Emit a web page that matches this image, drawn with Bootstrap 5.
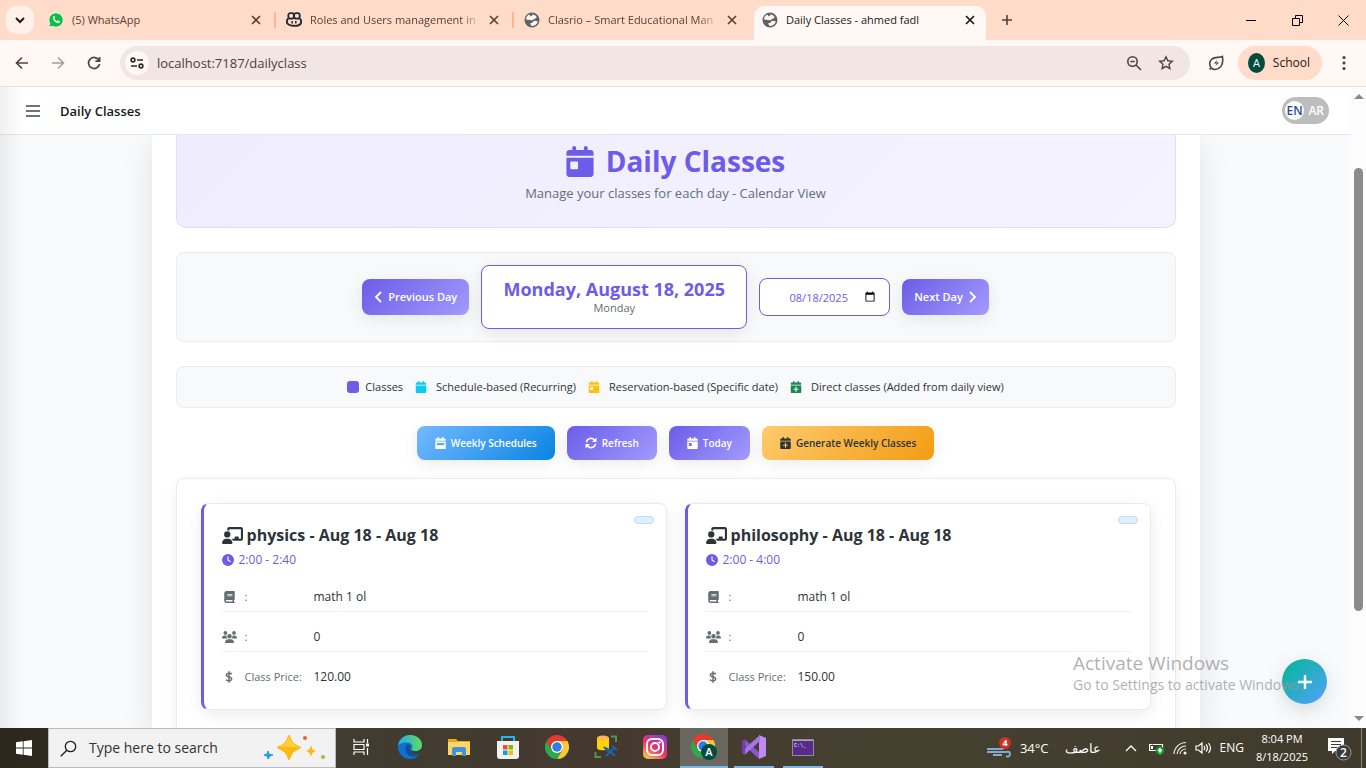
<!DOCTYPE html>
<html lang="en">
<head>
<meta charset="utf-8">
<meta name="viewport" content="width=device-width, initial-scale=1">
<title>Daily Classes - ahmed fadl</title>
<link href="https://cdn.jsdelivr.net/npm/bootstrap@5.3.0/dist/css/bootstrap.min.css" rel="stylesheet">
<style>
:root { --violet: #6c5ce7; --violet-soft: #a29bfe; --ink: #2d3436; --muted: #636e72; --line: #e9ecef; }
body { font-family: "Open Sans", "Noto Sans", sans-serif; font-size: 12px; line-height: 20px; color: var(--ink); height: 100vh; overflow: hidden; }
svg { display: block; flex: none; }
button { font-family: inherit; }
.bare { border: 0; background: none; padding: 0; color: inherit; }

/* browser tabs */
.tabstrip { background: #ffdbc9; height: 40px; color: #5a4038; }
.tab-search { width: 28px; height: 28px; border-radius: 10px; background: #fff0ea; margin: 6px 4px 0 6px; color: #231917; }
.tab-slot { flex: 0 1 238px; min-width: 0; height: 40px; padding: 0 15px 0 10px; position: relative; }
.tab-slot.parted::after { content: ""; position: absolute; right: 0; top: 12px; width: 2px; height: 16px; background: #ffb68f; }
.tab-name { overflow: hidden; white-space: nowrap; flex: 1; font-size: 11px; }
.tab-fade { -webkit-mask-image: linear-gradient(90deg, #000 88%, transparent); mask-image: linear-gradient(90deg, #000 88%, transparent); }
.tab-live { color: #231917; }
.tab-live::before { content: ""; position: absolute; inset: 6px 4px 0 2px; background: #fff8f5; border-radius: 10px 10px 0 0; }
.tab-live > * { position: relative; }
.win-btn { width: 46px; height: 40px; color: #000; }

/* browser toolbar */
.toolbar { background: #fff8f5; height: 47px; border-bottom: 1px solid #f3dcd3; color: #53433e; }
.tool-btn { width: 36px; height: 36px; }
.omnibox { background: #f1e6e3; height: 34px; border-radius: 17px; padding: 0 12px 0 5px; }
.site-info { width: 24px; height: 24px; border-radius: 50%; background: #fff8f5; }
.url-field { border: 0; background: none; outline: 0; flex: 1; min-width: 0; font-size: 13px; color: #4b3e3a; padding: 0; }
.leaf-btn { margin: 0 14px 0 18px; }
.profile { background: #ffdbc9; height: 34px; border-radius: 17px; padding: 0 12px 0 10px; color: #2b1510; width: 84px; }
.initial { width: 20px; height: 20px; border-radius: 50%; background: #004d40; color: #fff; font-size: 11px; }

/* page */
.viewport-area { background: #f8fafc; min-height: 0; }
.page-bar { background: #fff; height: 48px; border-bottom: 1px solid #e5e7eb; padding: 0 22px 0 26px; position: relative; z-index: 2; }
.page-name { font-size: 13px; font-weight: 600; color: #16181d; }
.lang { background: #bdbdbd; width: 47px; height: 27px; border-radius: 14px; color: #fff; font-weight: 600; padding: 0 5px 0 3px; }
.lang-on { width: 19px; height: 19px; border-radius: 50%; background: #fff; color: #1f4e9e; }
.edge-shade { position: absolute; inset: 0 auto 0 0; width: 24px; background: linear-gradient(90deg, rgba(0,0,0,.06), transparent); z-index: 3; pointer-events: none; }
.sheet { background: #fff; width: 100%; max-width: 1048px; padding: 0 24px; box-shadow: 0 10px 30px rgba(0,0,0,.1); height: 100%; }
.hero { background: linear-gradient(135deg, #efecfe, #f5f3ff); border: 1px solid #e1ddf8; border-top: 0; border-radius: 0 0 10px 10px; padding: 6px 24px 24px; margin-bottom: 24px; }
.hero h1 { font-size: 28px; line-height: 40px; font-weight: 700; color: var(--violet); margin: 0 0 2px; }
.hero p { font-size: 13px; margin: 0; color: var(--muted); }
.strip { background: #f8f9fa; border: 1px solid var(--line); border-radius: 8px; }
.soft { box-shadow: 0 4px 16px rgba(0,0,0,.08); }
.day-nav { min-height: 90px; }
.pill-btn { border: 0; border-radius: 8px; font-size: 10px; font-weight: 600; color: #fff; display: flex; align-items: center; justify-content: center; gap: 5px; height: 34px; padding: 0 18px; white-space: nowrap; box-shadow: 0 4px 16px rgba(0,0,0,.08); }
.pill-violet { background: linear-gradient(135deg, var(--violet), var(--violet-soft)); }
.pill-blue { background: linear-gradient(135deg, #74b9ff, #0984e3); }
.pill-amber { background: linear-gradient(135deg, #fdcb6e, #f39c12); color: var(--ink); }
.pill-nav { height: 36px; padding: 0 12px; font-size: 11px; }
.day-box { background: #fff; border: 1px solid var(--violet); border-radius: 8px; padding: 12px 20px; min-width: 266px; }
.day-long { font-size: 18px; line-height: 22px; font-weight: 700; color: var(--violet); }
.day-short { font-size: 11px; line-height: 16px; color: var(--muted); }
.day-input { width: 131px; height: 38px; border: 1px solid var(--violet); border-radius: 8px; background: #fff; color: var(--violet); font: 11px "Open Sans", sans-serif; padding: 0 13px; text-align: center; }
.day-input::-webkit-calendar-picker-indicator { width: 12px; height: 12px; padding: 0; }
.legend-row { padding: 10px; font-size: 11px; gap: 11px; }
.swatch { width: 12px; height: 12px; border-radius: 3px; background: var(--violet); margin-right: 6px; }
.actions { gap: 12px; margin: 18px 0; }
.board { border: 1px solid var(--line); border-radius: 8px; padding: 24px; background: #fff; height: 400px; box-shadow: 0 4px 16px rgba(0,0,0,.05); }
.class-grid { display: grid; grid-template-columns: 1fr 1fr; gap: 18px; }
.lesson { position: relative; border: 1px solid var(--line); border-left: 3px solid var(--violet); border-radius: 8px; padding: 18px; background: #fff; }
.lesson h2 { font-size: 16px; line-height: 26px; font-weight: 700; margin: 0 0 2px; }
.lesson-time { color: var(--violet); margin-bottom: 2px; gap: 5px; }
.status-chip { position: absolute; top: 12px; right: 12px; width: 20px; height: 8px; border-radius: 4px; background: #dfeffe; border: 1px solid #bcdcfb; }
.fact { padding: 15px 0 4px; border-bottom: 1px solid #f1f3f4; gap: 8px; color: var(--muted); }
.fact:last-child { border-bottom: 0; padding-bottom: 0; margin-bottom: 4px; }
.fact-icon { width: 15px; display: flex; justify-content: center; }
.fact dt { width: 61px; font-size: 11px; font-weight: 400; white-space: nowrap; }
.fact dd { margin: 0; font-weight: 500; color: var(--ink); }
.add-fab { position: absolute; right: 24px; bottom: 24px; width: 45px; height: 45px; border-radius: 50%; border: 0; background: linear-gradient(135deg, #00b894, #54a0ff); color: #fff; box-shadow: 0 6px 20px rgba(0,0,0,.13); z-index: 4; }
.activation { position: absolute; right: 18px; bottom: 33px; width: 260px; color: rgba(150,150,150,.75); z-index: 5; pointer-events: none; white-space: nowrap; }
.activation-head { font-size: 19px; line-height: 24px; }
.activation-note { font-size: 14px; line-height: 20px; }
.scroller { width: 15px; background: #fcfcfc; padding: 7px 0; color: #8b8b8b; }
.scroll-gap { flex: 69; }
.scroll-thumb { width: 9px; border-radius: 5px; background: #8b8b8b; flex: 443; }
.scroll-rest { flex: 105; }

/* taskbar */
.taskbar { height: 40px; background: linear-gradient(90deg, #2c261c, #403c2f 25%, #45392f 45%, #45412f 65%, #403a2c); color: #fff; }
.start { width: 48px; }
.search-wrap { width: 288px; background: #f2f2f2; border: 1px solid #bbb; color: #1c1c1c; padding: 0 8px 0 11px; }
.search-wrap input { border: 0; background: none; outline: 0; flex: 1; min-width: 0; padding: 0; font-size: 14px; color: #333; }
.search-wrap input::placeholder { color: #333; opacity: 1; }
.task { width: 48px; margin-right: 1px; border-bottom: 2px solid transparent; }
.task-view { width: 50px; margin: 0; }
.task.running { width: 40px; margin: 0 4px 0 5px; border-color: #76b9ed; }
.task.current { background: #6a675e; border-color: #76b9ed; }
.clock { width: 60px; font-size: 11px; line-height: 18px; }
.temp { font-size: 13px; }
.show-desktop { width: 5px; border-left: 1px solid #8a867b; }
</style>
</head>
<body class="d-flex flex-column">

<svg width="0" height="0" class="position-absolute" aria-hidden="true">
  <defs>
    <symbol id="x" viewBox="0 0 10 10"><path d="M1 1l8 8M9 1L1 9" stroke="currentColor" stroke-width="1.7" fill="none"/></symbol>
    <symbol id="globe" viewBox="0 0 16 16"><circle cx="8" cy="8" r="7.5" fill="#5f6368"/><path d="M8.5 2.2c1.8.3 3.6 1.500 4.300 3.200-1 .2-1.300 1.400-2.500 1.500-1.300.1-1.200 1.200-2.300 1.400-1.400.1-2.900-.6-4.200-.5-.6.100-1.500-.3-1.800-.8.300-2 1.500-3.700 3.200-4.500.3.700 1.300 1 1.200 1.800 1 0 1.800-.4 2.100-2.100zM13.800 9c-.2 2-1.500 3.900-3.500 4.600-.9.3-2 .4-3.100.2 0-.9-.9-1.200-.9-2.100.1-.8 1.500-.8 2.300-1.300.9-.6.800-1.500 1.900-1.600 1.100-.1 2.200.700 3.300.2z" fill="#fff5ef"/></symbol>
    <symbol id="cal" viewBox="0 0 448 512"><path fill="currentColor" d="M96 32V64H48C21.500 64 0 85.500 0 112v48H448V112c0-26.500-21.500-48-48-48H352V32c0-17.700-14.300-32-32-32s-32 14.300-32 32V64H160V32c0-17.700-14.300-32-32-32S96 14.300 96 32zM448 192H0V464c0 26.500 21.500 48 48 48H400c26.500 0 48-21.500 48-48V192z"/></symbol>
    <symbol id="cal-day" viewBox="0 0 448 512"><path fill="currentColor" fill-rule="evenodd" d="M128 0c17.700 0 32 14.300 32 32V64H288V32c0-17.700 14.300-32 32-32s32 14.300 32 32V64h48c26.500 0 48 21.500 48 48v48H0V112C0 85.500 21.500 64 48 64H96V32c0-17.700 14.300-32 32-32zM0 192H448V464c0 26.500-21.500 48-48 48H48c-26.500 0-48-21.500-48-48V192zm80 64c-8.800 0-16 7.200-16 16v96c0 8.800 7.200 16 16 16h96c8.800 0 16-7.200 16-16V272c0-8.800-7.200-16-16-16H80z"/></symbol>
    <symbol id="cal-week" viewBox="0 0 448 512"><path fill="currentColor" fill-rule="evenodd" d="M128 0c17.700 0 32 14.300 32 32V64H288V32c0-17.700 14.300-32 32-32s32 14.300 32 32V64h48c26.500 0 48 21.500 48 48v48H0V112C0 85.500 21.500 64 48 64H96V32c0-17.700 14.300-32 32-32zM0 192H448V464c0 26.500-21.500 48-48 48H48c-26.500 0-48-21.500-48-48V192zm80 64c-8.800 0-16 7.200-16 16v64c0 8.800 7.200 16 16 16H368c8.800 0 16-7.200 16-16V272c0-8.800-7.200-16-16-16H80z"/></symbol>
    <symbol id="cal-plus" viewBox="0 0 448 512"><path fill="currentColor" fill-rule="evenodd" d="M128 0c17.700 0 32 14.300 32 32V64H288V32c0-17.700 14.300-32 32-32s32 14.300 32 32V64h48c26.500 0 48 21.500 48 48v48H0V112C0 85.500 21.500 64 48 64H96V32c0-17.700 14.300-32 32-32zM0 192H448V464c0 26.500-21.500 48-48 48H48c-26.500 0-48-21.500-48-48V192zM200 248v80h-80v48h80v80h48v-80h80v-48h-80v-80z"/></symbol>
    <symbol id="sync" viewBox="0 0 16 16"><path d="M2 7a6 6 0 0 1 10.600-3M14 9a6 6 0 0 1-10.600 3" fill="none" stroke="currentColor" stroke-width="2.200"/><path d="M15.300.8v6H9.300zM.7 15.200v-6h6z" fill="currentColor"/></symbol>
    <symbol id="clock" viewBox="0 0 512 512"><path fill="currentColor" fill-rule="evenodd" d="M256 0a256 256 0 1 1 0 512A256 256 0 1 1 256 0zM232 120V256c0 8 4 15.500 10.700 20l96 64c11 7.400 25.900 4.400 33.300-6.700s4.400-25.900-6.700-33.300L280 243.200V120c0-13.300-10.700-24-24-24s-24 10.700-24 24z"/></symbol>
    <symbol id="book" viewBox="0 0 448 512"><path fill="currentColor" fill-rule="evenodd" d="M96 0C43 0 0 43 0 96V416c0 53 43 96 96 96H416c17.700 0 32-14.300 32-32s-14.300-32-32-32V384c17.700 0 32-14.300 32-32V32c0-17.700-14.300-32-32-32H96zm0 384H352v64H96c-17.700 0-32-14.300-32-32s14.300-32 32-32zm32-240c0-8.800 7.200-16 16-16H336c8.800 0 16 7.200 16 16s-7.200 16-16 16H144c-8.800 0-16-7.200-16-16zm16 48H336c8.800 0 16 7.200 16 16s-7.200 16-16 16H144c-8.800 0-16-7.200-16-16s7.200-16 16-16z"/></symbol>
    <symbol id="group" viewBox="0 0 640 512"><path fill="currentColor" d="M144 0a80 80 0 1 1 0 160A80 80 0 1 1 144 0zM512 0a80 80 0 1 1 0 160A80 80 0 1 1 512 0zM0 298.700C0 239.800 47.800 192 106.700 192h42.700c15.900 0 31 3.500 44.600 9.700c-1.300 7.200-1.900 14.700-1.900 22.300c0 38.200 16.800 72.500 43.300 96H21.300C9.600 320 0 310.400 0 298.700zM405.300 320c26.600-23.500 43.300-57.800 43.300-96c0-7.600-.7-15-1.900-22.300c13.600-6.300 28.700-9.700 44.600-9.700h42.700C592.200 192 640 239.800 640 298.700c0 11.800-9.600 21.300-21.300 21.300H405.300zM224 224a96 96 0 1 1 192 0 96 96 0 1 1-192 0zM128 485.300C128 411.700 187.700 352 261.300 352H378.700C452.300 352 512 411.700 512 485.300c0 14.700-11.900 26.700-26.700 26.700H154.700c-14.700 0-26.700-11.900-26.700-26.700z"/></symbol>
    <symbol id="dollar" viewBox="0 0 320 512"><path d="M262 110c-60-14-190-36-214 52-22 112 240 68 228 178-12 100-160 78-232 46M160 32v448" fill="none" stroke="currentColor" stroke-width="62" stroke-linecap="round"/></symbol>
    <symbol id="teach" viewBox="0 0 640 512"><path fill="currentColor" d="M160 64c0-35.300 28.700-64 64-64H576c35.300 0 64 28.700 64 64V352c0 35.300-28.700 64-64 64H336.800c-11.800-25.500-29.900-47.500-52.400-64H384V320c0-17.700 14.300-32 32-32h64c17.700 0 32 14.300 32 32v32h64V64H224v49.100C205.200 102.200 183.300 96 160 96V64zm0 64a96 96 0 1 1 0 192 96 96 0 1 1 0-192zM133.300 352h53.300C260.300 352 320 411.700 320 485.300c0 14.700-11.900 26.700-26.700 26.700H26.700C11.900 512 0 500.100 0 485.300C0 411.700 59.700 352 133.300 352z"/></symbol>
    <symbol id="chrome" viewBox="0 0 24 24"><path d="M12 6h10.400A12 12 0 0 1 12 24l5.200-9z" fill="#fcc934"/><path d="M1.600 6A12 12 0 0 0 12 24l5.200-9H6.800z" fill="#2da94f"/><path d="M1.600 6A12 12 0 0 1 22.400 6H12l-5.200 9z" fill="#e33b2e"/><circle cx="12" cy="12" r="6" fill="#fff"/><circle cx="12" cy="12" r="4.700" fill="#2f7ce6"/></symbol>
  </defs>
</svg>

<header class="tabstrip d-flex flex-shrink-0">
  <button class="bare tab-search d-flex align-items-center justify-content-center" aria-label="Search tabs"><svg width="10" height="8" viewBox="0 0 10 8"><path d="M1 2l4 4 4-4" fill="none" stroke="currentColor" stroke-width="2"/></svg></button>
  <div class="tab-slot parted d-flex align-items-center">
    <svg class="me-2" width="16" height="16" viewBox="0 0 16 16"><path d="M8 .8a7.200 7.200 0 1 1-3.500 13.500L.8 15.300l1-3.700A7.200 7.200 0 0 1 8 .8z" fill="#0fbf45" stroke="#fff" stroke-width=".8"/><path d="M5.300 4.300c.6-.6 1.200-.3 1.400.3l.5 1.200c.1.500-.5.8-.7 1.200.6 1.100 1.500 1.900 2.600 2.300.4-.3.700-1.100 1.200-.9l1.400.7c.5.300.2 1.300-.3 1.700-2.500 1.600-8-3-6.100-6.500z" fill="#fff"/></svg>
    <span class="tab-name">(5) WhatsApp</span><button class="bare" aria-label="Close tab"><svg width="10" height="10"><use href="#x"/></svg></button>
  </div>
  <div class="tab-slot parted d-flex align-items-center">
    <svg class="me-2" width="16" height="16" viewBox="0 0 16 16"><rect x="2.300" y="1.200" width="5.600" height="5.400" rx="2" fill="none" stroke="#24292f" stroke-width="1.800"/><rect x="8.100" y="1.200" width="5.600" height="5.400" rx="2" fill="none" stroke="#24292f" stroke-width="1.800"/><path d="M2.200 6.500C1 7.500.7 9 1 11c2 3 12 4.500 14 0 .3-2 0-3.500-1.200-4.500" fill="none" stroke="#24292f" stroke-width="1.900"/><path d="M6.200 9v2.500M9.800 9v2.500" stroke="#24292f" stroke-width="1.500"/></svg>
    <span class="tab-name tab-fade">Roles and Users management in</span><button class="bare ms-2" aria-label="Close tab"><svg width="10" height="10"><use href="#x"/></svg></button>
  </div>
  <div class="tab-slot d-flex align-items-center">
    <svg class="me-2" width="16" height="16"><use href="#globe"/></svg>
    <span class="tab-name tab-fade">Clasrio – Smart Educational Man</span><button class="bare ms-2" aria-label="Close tab"><svg width="10" height="10"><use href="#x"/></svg></button>
  </div>
  <div class="tab-slot tab-live d-flex align-items-center">
    <svg class="me-2" width="16" height="16"><use href="#globe"/></svg>
    <span class="tab-name">Daily Classes - ahmed fadl</span><button class="bare" aria-label="Close tab"><svg width="10" height="10"><use href="#x"/></svg></button>
  </div>
  <button class="bare px-2" aria-label="New tab"><svg class="mx-1" width="10" height="10" viewBox="0 0 10 10"><path d="M5 0v10M0 5h10" stroke="currentColor" stroke-width="1.600"/></svg></button>
  <div class="d-flex ms-auto">
    <button class="bare win-btn d-flex align-items-center justify-content-center" aria-label="Minimize"><svg width="10" height="10" viewBox="0 0 10 10"><path d="M0 5.500h10" stroke="currentColor"/></svg></button>
    <button class="bare win-btn d-flex align-items-center justify-content-center" aria-label="Restore"><svg width="11" height="11" viewBox="0 0 11 11"><path d="M.5 3.500h7v7h-7zM3.500 3V.500h7v7H8" fill="none" stroke="currentColor"/></svg></button>
    <button class="bare win-btn d-flex align-items-center justify-content-center" aria-label="Close window"><svg width="11" height="11" viewBox="0 0 11 11"><path d="M.5.5l10 10M10.500.5l-10 10" fill="none" stroke="currentColor"/></svg></button>
  </div>
</header>

<nav class="toolbar d-flex flex-shrink-0 align-items-center ps-1" aria-label="Browser">
  <button class="bare tool-btn d-flex align-items-center justify-content-center" aria-label="Back"><svg width="14" height="14" viewBox="0 0 14 14"><path d="M7 1.500L1.500 7 7 12.500M1.500 7H13" fill="none" stroke="currentColor" stroke-width="1.700"/></svg></button>
  <button class="bare tool-btn d-flex align-items-center justify-content-center opacity-50" aria-label="Forward"><svg width="14" height="14" viewBox="0 0 14 14"><path d="M7 1.500L12.500 7 7 12.500M12.500 7H1" fill="none" stroke="currentColor" stroke-width="1.500"/></svg></button>
  <button class="bare tool-btn d-flex align-items-center justify-content-center" aria-label="Reload"><svg width="14" height="14" viewBox="0 0 14 14"><path d="M12 4.500A5.500 5.500 0 1 0 12.500 8M12.600 1v4.200H8.400" fill="none" stroke="currentColor" stroke-width="1.700"/></svg></button>
  <div class="omnibox d-flex align-items-center flex-grow-1 ms-2">
    <button class="bare site-info d-flex align-items-center justify-content-center me-2" aria-label="Site information"><svg width="14" height="12" viewBox="0 0 14 12"><g fill="none" stroke="#332824" stroke-width="1.600"><circle cx="3" cy="3" r="1.900"/><path d="M7 3h6M1 9h6"/><circle cx="11" cy="9" r="1.900"/></g></svg></button>
    <input class="url-field" type="text" aria-label="Address" value="localhost:7187/dailyclass">
    <button class="bare me-3" aria-label="Zoom"><svg width="16" height="16" viewBox="0 0 16 16"><g fill="none" stroke="currentColor" stroke-width="1.600"><circle cx="6.500" cy="6.500" r="4.700"/><path d="M10 10l5 5M4.300 6.500h4.400"/></g></svg></button>
    <button class="bare me-1" aria-label="Bookmark"><svg width="16" height="16" viewBox="0 0 16 16"><path d="M8 1.800l1.900 4 4.400.5-3.300 3 .9 4.300L8 11.400l-3.900 2.200.9-4.300-3.300-3 4.400-.5z" fill="none" stroke="currentColor" stroke-width="1.400"/></svg></button>
  </div>
  <button class="bare leaf-btn" aria-label="Energy saver"><svg width="16" height="16" viewBox="0 0 16 16"><path d="M1.500 14.500l1.700-1.700M3.200 12.800C.8 9.800 1.600 6 4 4c3-2.300 7-1 10.400-2.600.8 4.600-.3 9.600-3.500 11.800-2.400 1.600-5.700 1.500-7.700-.4z" fill="none" stroke="currentColor" stroke-width="1.600"/><path d="M9.600 4.500L5.800 8.600h3L7.300 11.300l3.900-3.900h-3z" fill="currentColor"/></svg></button>
  <button class="bare profile d-flex align-items-center gap-1"><span class="initial d-flex align-items-center justify-content-center me-1">A</span>School</button>
  <button class="bare mx-3 px-1" aria-label="Menu"><svg width="4" height="16" viewBox="0 0 4 16" fill="currentColor"><circle cx="2" cy="2.500" r="1.600"/><circle cx="2" cy="8" r="1.600"/><circle cx="2" cy="13.500" r="1.600"/></svg></button>
</nav>

<div class="viewport-area d-flex flex-grow-1">
  <div class="position-relative flex-grow-1 d-flex flex-column overflow-hidden">
    <div class="edge-shade"></div>
    <header class="page-bar d-flex align-items-center flex-shrink-0">
      <button class="bare me-3" aria-label="Toggle menu"><svg width="14" height="12" viewBox="0 0 14 12"><path d="M0 1h14M0 6h14M0 11h14" stroke="#6b7280" stroke-width="2"/></svg></button>
      <span class="page-name ms-1">Daily Classes</span>
      <button class="bare lang ms-auto d-flex align-items-center justify-content-between"><span class="lang-on d-flex align-items-center justify-content-center">EN</span><span>AR</span></button>
    </header>

    <main class="flex-grow-1 overflow-hidden">
      <div class="sheet mx-auto">
        <section class="hero text-center">
          <h1 class="d-flex justify-content-center align-items-center gap-2"><svg class="me-1" width="28" height="31"><use href="#cal-day"/></svg>Daily Classes</h1>
          <p>Manage your classes for each day - Calendar View</p>
        </section>

        <section class="strip day-nav d-flex justify-content-center align-items-center flex-wrap py-2 mb-4">
          <div class="d-flex align-items-center gap-2 py-1">
            <button class="pill-btn pill-violet pill-nav me-1"><svg width="9" height="12" viewBox="0 0 9 12"><path d="M7 1L2 6l5 5" fill="none" stroke="currentColor" stroke-width="1.800"/></svg>Previous Day</button>
            <div class="day-box soft text-center me-1"><div class="day-long">Monday, August 18, 2025</div><div class="day-short">Monday</div></div>
            <input class="day-input me-1" type="date" value="2025-08-18" aria-label="Pick a day">
            <button class="pill-btn pill-violet pill-nav">Next Day<svg width="9" height="12" viewBox="0 0 9 12"><path d="M2 1l5 5-5 5" fill="none" stroke="currentColor" stroke-width="1.800"/></svg></button>
          </div>
        </section>

        <section class="strip legend-row d-flex justify-content-center align-items-center flex-wrap">
          <span class="d-flex align-items-center"><i class="swatch"></i>Classes</span>
          <span class="d-flex align-items-center"><svg class="text-info me-2" width="14" height="12"><use href="#cal"/></svg>Schedule-based (Recurring)</span>
          <span class="d-flex align-items-center"><svg class="text-warning me-2" width="14" height="12"><use href="#cal-day"/></svg>Reservation-based (Specific date)</span>
          <span class="d-flex align-items-center"><svg class="text-success me-2" width="14" height="12"><use href="#cal-plus"/></svg>Direct classes (Added from daily view)</span>
        </section>

        <section class="actions d-flex justify-content-center flex-wrap">
          <button class="pill-btn pill-blue"><svg width="11" height="12"><use href="#cal-week"/></svg>Weekly Schedules</button>
          <button class="pill-btn pill-violet"><svg width="12" height="12"><use href="#sync"/></svg>Refresh</button>
          <button class="pill-btn pill-violet"><svg width="11" height="12"><use href="#cal-day"/></svg>Today</button>
          <button class="pill-btn pill-amber"><svg width="11" height="12"><use href="#cal-plus"/></svg>Generate Weekly Classes</button>
        </section>

        <section class="board">
          <div class="class-grid">
            <article class="lesson soft">
              <span class="status-chip"></span>
              <h2 class="d-flex align-items-center gap-1"><svg width="21" height="17"><use href="#teach"/></svg>physics - Aug 18 - Aug 18</h2>
              <div class="lesson-time d-flex align-items-center"><svg width="12" height="12"><use href="#clock"/></svg>2:00 - 2:40</div>
              <dl class="m-0">
                <div class="fact d-flex align-items-center"><span class="fact-icon"><svg width="11" height="12"><use href="#book"/></svg></span><dt>:</dt><dd>math 1 ol</dd></div>
                <div class="fact d-flex align-items-center"><span class="fact-icon"><svg width="15" height="12"><use href="#group"/></svg></span><dt>:</dt><dd>0</dd></div>
                <div class="fact d-flex align-items-center"><span class="fact-icon"><svg width="8" height="12"><use href="#dollar"/></svg></span><dt>Class Price:</dt><dd>120.00</dd></div>
              </dl>
            </article>
            <article class="lesson soft">
              <span class="status-chip"></span>
              <h2 class="d-flex align-items-center gap-1"><svg width="21" height="17"><use href="#teach"/></svg>philosophy - Aug 18 - Aug 18</h2>
              <div class="lesson-time d-flex align-items-center"><svg width="12" height="12"><use href="#clock"/></svg>2:00 - 4:00</div>
              <dl class="m-0">
                <div class="fact d-flex align-items-center"><span class="fact-icon"><svg width="11" height="12"><use href="#book"/></svg></span><dt>:</dt><dd>math 1 ol</dd></div>
                <div class="fact d-flex align-items-center"><span class="fact-icon"><svg width="15" height="12"><use href="#group"/></svg></span><dt>:</dt><dd>0</dd></div>
                <div class="fact d-flex align-items-center"><span class="fact-icon"><svg width="8" height="12"><use href="#dollar"/></svg></span><dt>Class Price:</dt><dd>150.00</dd></div>
              </dl>
            </article>
          </div>
        </section>
      </div>
    </main>

    <button class="add-fab d-flex align-items-center justify-content-center" aria-label="Add class"><svg width="16" height="16" viewBox="0 0 16 16"><path d="M8 1v14M1 8h14" stroke="currentColor" stroke-width="2.400"/></svg></button>
    <div class="activation"><div class="activation-head">Activate Windows</div><div class="activation-note">Go to Settings to activate Windows.</div></div>
  </div>
  <div class="scroller d-flex flex-column align-items-center" aria-hidden="true">
    <svg width="10" height="5" viewBox="0 0 10 5"><path d="M0 5l5-5 5 5z" fill="currentColor"/></svg>
    <div class="scroll-gap"></div><div class="scroll-thumb"></div><div class="scroll-rest"></div>
    <svg width="10" height="5" viewBox="0 0 10 5"><path d="M0 0l5 5 5-5z" fill="currentColor"/></svg>
  </div>
</div>

<footer class="taskbar d-flex flex-shrink-0">
  <button class="bare start d-flex align-items-center justify-content-center" aria-label="Start"><svg width="16" height="16" viewBox="0 0 16 16" fill="#fff"><path d="M0 2.200l6.800-.9v6.300H0zM7.600 1.200L16 0v7.600H7.600zM0 8.400h6.800v6.300L0 13.800zM7.600 8.400H16V16l-8.400-1.200z"/></svg></button>
  <div class="search-wrap d-flex align-items-center">
    <svg class="me-2" width="17" height="17" viewBox="0 0 17 17"><g fill="none" stroke="currentColor" stroke-width="1.300"><circle cx="10.500" cy="6.500" r="5.200"/><path d="M6.800 10.200L.8 16.200"/></g></svg>
    <input class="ms-1" type="text" placeholder="Type here to search" aria-label="Type here to search">
    <svg width="64" height="28" viewBox="0 0 64 28"><path d="M26 2c2 6 4 9 11 11.500C30 16 28 19 26 25c-2-6-4-9-11-11.500C22 11 24 8 26 2z" fill="#fdb913" stroke="#fdb913" stroke-width="2" stroke-linejoin="round"/><path d="M26 2c2 6 4 9 11 11.500-6 0-16-2-22 0C22 11 24 8 26 2z" fill="#ffcf38"/><path d="M48 11c1 4 2 5 5 6-3 1-4 2-5 6-1-4-2-5-5-6 3-1 4-2 5-6z" fill="#fdb913"/><path d="M5 17l1 3 4 1-3 1-2 3-1-3-3-1 3-1z" fill="#1f9ee8" stroke="#1f9ee8"/><circle cx="42" cy="4" r="2" fill="#f0622d"/><circle cx="60" cy="23" r="2" fill="#8cc63f"/></svg>
  </div>
  <button class="bare task task-view d-flex align-items-center justify-content-center" aria-label="Task view"><svg width="17" height="16" viewBox="0 0 17 16"><path d="M1 0v3h10V0M1 16v-3h10v3M1 5.500h10v5H1zM14.500 0v4M14.500 9v7" fill="none" stroke="#fff" stroke-width="1.200"/><path d="M13 4.500h3v3h-3z" fill="#fff"/></svg></button>
  <button class="bare task d-flex align-items-center justify-content-center" aria-label="Edge"><svg width="24" height="24" viewBox="0 0 24 24"><defs><linearGradient id="eg" x1="0" x2="1"><stop offset="0" stop-color="#28a8ea"/><stop offset="1" stop-color="#5fdc5a"/></linearGradient></defs><circle cx="12" cy="12" r="12" fill="#0c71cf"/><path d="M0 11C.5 4.500 6 0 12 0c7 0 12 4.500 12 10 0 4-3 6.200-6.500 6.200-3 0-4.500-1.200-4-2.200 2.500-3.500-.5-6.500-4.500-6.500C4.500 7.500 1 9 0 11z" fill="url(#eg)"/><path d="M9 9.500c-3 4-1.500 11 4.500 12 4 .5 7-1 9.500-4-5 2-10.500 1-11-3.500 0-1 .5-2 .5-3 0-.8-1.500-2-3.500-1.500z" fill="#174f93"/><path d="M24 17c-2 2-5 2.500-8 1.800-3-.8-3-3-2.500-4.800 0 1.500 1.500 2.200 4 2.200 3 0 5-1.200 6.500-3.700z" fill="#403c2f"/></svg></button>
  <button class="bare task d-flex align-items-center justify-content-center" aria-label="File Explorer"><svg width="22" height="20" viewBox="0 0 22 20"><path d="M0 2h8l2 2h12v14H0z" fill="#e8a820"/><path d="M0 5h22v13H0z" fill="#ffd666"/><path d="M4 19v-7q0-2 2-2h10q2 0 2 2v7h-4v-4H8v4z" fill="#3f93dc"/></svg></button>
  <button class="bare task d-flex align-items-center justify-content-center" aria-label="Store"><svg width="24" height="24" viewBox="0 0 24 24"><path d="M6 6V2h12v4" fill="none" stroke="#28b5ea" stroke-width="2"/><path d="M1 6h22v15q0 3-3 3H4q-3 0-3-3z" fill="#f1f1f1"/><path d="M7 10h4.500v4.500H7z" fill="#f25022"/><path d="M12.500 10H17v4.500h-4.500z" fill="#7fba00"/><path d="M7 15.500h4.500V20H7z" fill="#00a4ef"/><path d="M12.500 15.500H17V20h-4.500z" fill="#ffb900"/></svg></button>
  <button class="bare task d-flex align-items-center justify-content-center" aria-label="Chrome"><svg width="24" height="24"><use href="#chrome"/></svg></button>
  <button class="bare task d-flex align-items-center justify-content-center" aria-label="Management Studio"><svg width="24" height="24" viewBox="0 0 24 24"><path d="M3 3v10c0 3 12 3 12 0V3z" fill="#ffd400"/><ellipse cx="9" cy="3" rx="6" ry="2.500" fill="#ffb74d"/><path d="M17 1.500h5V7M1.500 17v5H7" fill="none" stroke="#4d9a45" stroke-width="2"/><path d="M12 13l9 8M21 12l-9 9" stroke="#1565b0" stroke-width="2.200"/><path d="M18 11l5 4M10 12l4 4" stroke="#1565b0" stroke-width="2"/></svg></button>
  <button class="bare task d-flex align-items-center justify-content-center" aria-label="Instagram"><svg width="24" height="24" viewBox="0 0 24 24"><defs><linearGradient id="ig" x1=".15" y1="1" x2=".8" y2="0"><stop offset="0" stop-color="#ffc83c"/><stop offset=".45" stop-color="#f2326a"/><stop offset="1" stop-color="#8e3ad6"/></linearGradient></defs><rect width="24" height="24" rx="5" fill="url(#ig)"/><g fill="none" stroke="#fff" stroke-width="1.900"><rect x="4" y="4" width="16" height="16" rx="5"/><circle cx="12" cy="12" r="4"/></g><circle cx="16.600" cy="7.400" r="1.200" fill="#fff"/></svg></button>
  <button class="bare task current d-flex align-items-center justify-content-center" aria-label="Chrome, School profile"><svg width="26" height="26" viewBox="0 0 26 26"><use href="#chrome" width="24" height="24"/><circle cx="18" cy="18" r="8" fill="#004d40"/><text x="18" y="22" font-size="11" font-weight="600" text-anchor="middle" fill="#fff">A</text></svg></button>
  <button class="bare task running d-flex align-items-center justify-content-center" aria-label="Visual Studio"><svg width="24" height="24" viewBox="0 0 24 24"><path d="M17 0l7 3v18l-7 3z" fill="#c08af5"/><path d="M0 6l3-1.500L17 17v7L0 8z" fill="#8a55cf"/><path d="M0 18l3 1.500L18 6V0L0 16z" fill="#a674e4"/><path d="M0 6l3-1.500v15L0 18z" fill="#6f3fb0"/></svg></button>
  <button class="bare task running d-flex align-items-center justify-content-center" aria-label="Terminal"><svg width="22" height="17" viewBox="0 0 22 17"><rect x=".5" y=".5" width="21" height="16" fill="#572a8c" stroke="#8d8d9a"/><path d="M1 1.500h20" stroke="#aaa" stroke-width="1"/><text x="2" y="8" font-size="5" fill="#fff" font-family="Liberation Mono, monospace">C:\_</text></svg></button>

  <div class="d-flex align-items-center ms-auto">
    <button class="bare temp d-flex align-items-center me-4"><svg class="me-2" width="26" height="22" viewBox="0 0 26 22"><path d="M1 12h14q4 0 4-4M1 15h19q4-1 4 2t-4 2.500M7 18h9" fill="none" stroke="#86a9cf" stroke-width="2"/><circle cx="19" cy="6" r="6" fill="#d22f27"/><text x="19" y="9" font-size="9" font-weight="700" text-anchor="middle" fill="#fff">4</text></svg><span class="me-3">34°C</span><span lang="ar" dir="rtl">عاصف</span></button>
    <button class="bare me-2 pe-1" aria-label="Hidden icons"><svg width="12" height="8" viewBox="0 0 12 8"><path d="M1 7l5-5 5 5" fill="none" stroke="#fff" stroke-width="1.300"/></svg></button>
    <svg class="me-2" width="16" height="14" viewBox="0 0 16 14"><path d="M3 3.500H.6v6h8M3.500 3.500h10v4" fill="none" stroke="#fff" stroke-width="1.200"/><path d="M2 5h2v3H2z" fill="#fff"/><circle cx="11" cy="9.500" r="4.300" fill="#0f9a26"/><path d="M11 7l2 2.500-2 1.500-2-1.500zM11 10v3" fill="#fff" stroke="#fff" stroke-width=".8"/></svg>
    <svg class="me-2" width="14" height="14" viewBox="0 0 14 14"><g fill="none" stroke="#e8e8e8" stroke-width="1.200"><path d="M1 13A12 12 0 0 1 13 1.500M4 13a9 9 0 0 1 9-8M7 13a6 6 0 0 1 6-5"/></g><circle cx="12" cy="12" r="1.500" fill="#fff"/></svg>
    <svg class="me-2" width="17" height="14" viewBox="0 0 17 14"><path d="M1 5v4h2.500L7 12V2L3.500 5zM9 5q1.500 2 0 4M11 3.500q3 3.500 0 7M13.500 2q4 5 0 10" fill="none" stroke="#fff" stroke-width="1.200"/></svg>
    <span class="me-2">ENG</span>
    <div class="clock text-center"><div>8:04 PM</div><div>8/18/2025</div></div>
    <button class="bare ms-3 me-2" aria-label="Notifications"><svg width="25" height="26" viewBox="0 0 25 26"><path d="M0 3h16v13H7l-3 3v-3H0z" fill="#fff"/><path d="M3 6.500h10M3 9.500h10M3 12.500h6" stroke="#403a2c" stroke-width="1.200"/><circle cx="15.500" cy="17.500" r="7.500" fill="#3a3a38" stroke="#9a9a95"/><text x="15.500" y="22" font-size="12" font-weight="600" text-anchor="middle" fill="#fff">2</text></svg></button>
    <div class="show-desktop align-self-stretch"></div>
  </div>
</footer>

<script src="https://cdn.jsdelivr.net/npm/bootstrap@5.3.0/dist/js/bootstrap.bundle.min.js"></script>
</body>
</html>
